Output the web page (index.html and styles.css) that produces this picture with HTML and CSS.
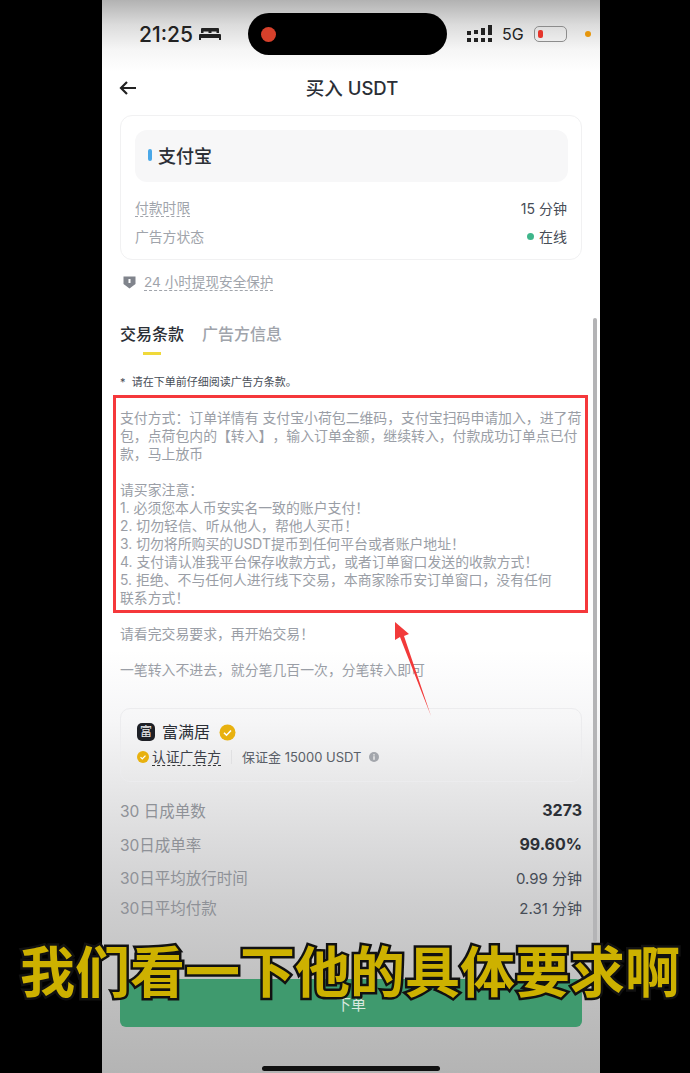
FILE: index.html
```html
<!DOCTYPE html>
<html lang="zh-CN">
<head>
    <meta charset="UTF-8">
    <meta name="viewport" content="width=device-width, initial-scale=1.0">
    <title>买入 USDT</title>
    <link rel="stylesheet" href="styles.css">
</head>
<body>
    <div class="phone">
        <!-- Status bar -->
        <div class="status-bar">
            <div class="status-left">
                <span class="time">21:25</span>
                <svg class="bed" width="22" height="14" viewBox="0 0 22 14">
                    <path d="M3 1h16a1 1 0 0 1 1 1v4h-2.500V4.500h-5V6h-3V4.500h-5V6H2V2a1 1 0 0 1 1-1z" fill="#222"/>
                    <path d="M1 7h20a1 1 0 0 1 1 1v5h-2v-2H2v2H0V8a1 1 0 0 1 1-1z" fill="#222"/>
                </svg>
            </div>
            <div class="island"><span class="rec-dot"></span></div>
            <div class="status-right">
                <svg class="signal" width="26" height="18" viewBox="0 0 26 18" fill="#222">
                    <rect x="0" y="6" width="4" height="4"/><rect x="0" y="13" width="4" height="4"/>
                    <rect x="7" y="5" width="4" height="4"/><rect x="7" y="13" width="4" height="4"/>
                    <rect x="14" y="3" width="4" height="7"/><rect x="14" y="13" width="4" height="4"/>
                    <rect x="21" y="0" width="4" height="10"/><rect x="21" y="13" width="4" height="4"/>
                </svg>
                <span class="net">5G</span>
                <span class="battery"><span class="battery-level"></span></span>
                <span class="orange-dot"></span>
            </div>
        </div>

        <!-- Nav -->
        <div class="nav">
            <svg class="back" width="18" height="14" viewBox="0 0 18 14" fill="none" stroke="#222" stroke-width="2.200">
                <path d="M17 7H2M8 1L2 7l6 6"/>
            </svg>
            <span class="nav-title">买入 USDT</span>
        </div>

        <div class="content">
            <!-- Payment card -->
            <div class="pay-card">
                <div class="pay-method"><span class="pay-mark"></span>支付宝</div>
                <div class="pay-row first">
                    <span class="label dashed">付款时限</span>
                    <span class="value">15 分钟</span>
                </div>
                <div class="pay-row">
                    <span class="label">广告方状态</span>
                    <span class="value"><span class="online-dot"></span>在线</span>
                </div>
            </div>

            <div class="safe-row">
                <svg width="13" height="14" viewBox="0 0 13 14">
                    <path d="M0.500 1.500h12v7.500l-6 4.500-6-4.500z" fill="#80848c"/>
                    <rect x="5.500" y="4" width="2" height="4" fill="#fff"/>
                </svg>
                <span class="label dashed">24 小时提现安全保护</span>
            </div>

            <!-- Tabs -->
            <div class="tabs">
                <div class="tab active">交易条款</div>
                <div class="tab">广告方信息</div>
            </div>

            <p class="note">*&nbsp; 请在下单前仔细阅读广告方条款。</p>

            <div class="terms">
                <p>支付方式：订单详情有 支付宝小荷包二维码，支付宝扫码申请加入，进了荷<br>包，点荷包内的【转入】，输入订单金额，继续转入，付款成功订单点已付<br>款，马上放币</p>
                <p>&nbsp;</p>
                <p>请买家注意：</p>
                <p>1. 必须您本人币安实名一致的账户支付！</p>
                <p>2. 切勿轻信、听从他人，帮他人买币！</p>
                <p>3. 切勿将所购买的USDT提币到任何平台或者账户地址！</p>
                <p>4. 支付请认准我平台保存收款方式，或者订单窗口发送的收款方式！</p>
                <p>5. 拒绝、不与任何人进行线下交易，本商家除币安订单窗口，没有任何<br>联系方式！</p>
                <p class="after">请看完交易要求，再开始交易！</p>
                <p>&nbsp;</p>
                <p>一笔转入不进去，就分笔几百一次，分笔转入即可</p>
            </div>

            <!-- Merchant -->
            <div class="merchant">
                <div class="merchant-name">
                    <span class="avatar">富</span>
                    <span class="merchant-title">富满居</span>
                    <svg width="17" height="17" viewBox="0 0 17 17">
                        <circle cx="8.500" cy="8.500" r="8" fill="#e8b10f"/>
                        <path d="M5 8.700l2.500 2.500L12 6.500" fill="none" stroke="#fff" stroke-width="1.600"/>
                    </svg>
                </div>
                <div class="merchant-meta">
                    <svg width="12" height="12" viewBox="0 0 17 17">
                        <circle cx="8.500" cy="8.500" r="8.500" fill="#e8b10f"/>
                        <path d="M5 8.700l2.500 2.500L12 6.500" fill="none" stroke="#fff" stroke-width="1.800"/>
                    </svg>
                    <span class="verified">认证广告方</span>
                    <span class="divider"></span>
                    <span class="deposit">保证金 15000 USDT</span>
                    <svg width="10" height="10" viewBox="0 0 10 10">
                        <circle cx="5" cy="5" r="5" fill="#a3a6ac"/>
                        <rect x="4.300" y="4.200" width="1.400" height="3.600" fill="#eee"/>
                        <rect x="4.300" y="2.200" width="1.400" height="1.300" fill="#eee"/>
                    </svg>
                </div>
            </div>

            <!-- Stats -->
            <div class="stats">
                <div class="stat s1"><span class="label">30 日成单数</span><span class="stat-strong">3273</span></div>
                <div class="stat s2"><span class="label">30日成单率</span><span class="stat-strong">99.60%</span></div>
                <div class="stat s3"><span class="label">30日平均放行时间</span><span class="value">0.99 分钟</span></div>
                <div class="stat s4"><span class="label">30日平均付款</span><span class="value">2.31 分钟</span></div>
            </div>

            <button class="order-btn">下单</button>
        </div>

        <div class="scrollbar"></div>
        <div class="home-bar"></div>
    </div>

    <!-- Video annotations -->
    <div class="red-box"></div>
    <svg class="red-arrow" width="44" height="96" viewBox="0 0 44 96">
        <polygon points="3,0 17,12 12,14 39,94 8,15 3,18" fill="#f23a3a"/>
    </svg>
    <div class="caption">我们看一下他的具体要求啊</div>
</body>
</html>
```

FILE: styles.css
```css
* {
    margin: 0;
    padding: 0;
    box-sizing: border-box;
}

body {
    position: relative;
    width: 690px;
    height: 1073px;
    overflow: hidden;
    background-color: #000;
    font-family: 'Inter', 'Noto Sans CJK SC', sans-serif;
    color: #1e2329;
    text-spacing-trim: space-all;
}

.phone {
    position: relative;
    width: 498px;
    height: 1073px;
    margin-left: 102px;
    padding-top: 13px;
    overflow: hidden;
    background: linear-gradient(#b2b2b2 0, #dcdcdc 25px, #f6f6f6 50px, #fff 72px, #fff 650px, #f6f6f7 720px, #e4e4e5 800px, #cfcfd0 900px, #bebebe 1000px, #b4b4b4 1073px);
}

/* Status bar */
.status-bar {
    display: flex;
    align-items: center;
    height: 42px;
    padding-left: 37px;
}

.status-left {
    display: flex;
    align-items: center;
    gap: 6px;
    width: 109px;
}

.time {
    font-size: 21px;
    font-weight: 500;
    color: #222;
}

.island {
    display: flex;
    align-items: center;
    width: 199px;
    height: 42px;
    padding-left: 13px;
    border-radius: 21px;
    background-color: #000;
}

.rec-dot {
    width: 15px;
    height: 15px;
    border-radius: 50%;
    background-color: #d6402b;
}

.status-right {
    display: flex;
    align-items: center;
    margin-left: 20px;
}

.net {
    margin-left: 9px;
    font-size: 16px;
    color: #222;
}

.battery {
    display: block;
    width: 33px;
    height: 16px;
    margin-left: 10px;
    padding: 3px;
    border: 1px solid #8c8c8c;
    border-radius: 5px;
}

.battery-level {
    display: block;
    width: 5px;
    height: 100%;
    border-radius: 2px;
    background-color: #e5352b;
}

.orange-dot {
    width: 6px;
    height: 6px;
    margin-left: 18px;
    border-radius: 50%;
    background-color: #e6960c;
}

/* Nav */
.nav {
    position: relative;
    display: flex;
    justify-content: center;
    align-items: center;
    height: 36px;
    margin-top: 14px;
}

.back {
    position: absolute;
    left: 17px;
    top: 12px;
}

.nav-title {
    position: relative;
    left: 1px;
    font-size: 18.500px;
    font-weight: 500;
    color: #2b2f36;
}

.content {
    padding: 0 18px;
}

/* Payment card */
.pay-card {
    height: 145px;
    margin-top: 10px;
    padding: 14px 13px 0 14px;
    border: 1px solid #f1f1f2;
    border-radius: 12px;
}

.pay-method {
    display: flex;
    align-items: center;
    gap: 6px;
    height: 52px;
    padding-left: 13px;
    padding-bottom: 2px;
    border-radius: 12px;
    background-color: #f7f7f8;
    font-size: 18px;
    font-weight: 500;
    color: #2b2f36;
}

.pay-mark {
    width: 4px;
    height: 12px;
    border-radius: 2px;
    background-color: #4aa8e8;
}

.pay-row {
    display: flex;
    justify-content: space-between;
    align-items: center;
    height: 28px;
    padding-right: 1px;
}

.pay-row.first {
    margin-top: 12px;
}

.label {
    font-size: 13.800px;
    color: #a0a4ab;
}

.label.dashed {
    border-bottom: 1px dashed #a0a4ab;
    line-height: 16px;
}

.value {
    font-size: 14px;
    color: #474d57;
}

.online-dot {
    display: inline-block;
    width: 7px;
    height: 7px;
    margin-right: 5px;
    border-radius: 50%;
    background-color: #3fb68b;
    vertical-align: 2px;
}

.safe-row {
    display: flex;
    align-items: center;
    gap: 8px;
    height: 20px;
    margin-top: 12px;
    padding-left: 3px;
}

.safe-row .label {
    font-size: 13.600px;
}

/* Tabs */
.tabs {
    display: flex;
    gap: 18px;
    margin-top: 30px;
}

.tab {
    font-size: 16px;
    font-weight: 500;
    line-height: 24px;
    color: #a0a4ab;
}

.tab.active {
    position: relative;
    color: #2b2f36;
}

.tab.active::after {
    content: '';
    position: absolute;
    left: 23px;
    bottom: -9px;
    width: 18px;
    height: 3px;
    background-color: #f0d93a;
}

.note {
    margin-top: 28px;
    font-size: 11px;
    line-height: 16px;
    color: #474d57;
}

/* Terms */
.terms {
    margin-top: 19px;
    width: 464px;
    font-size: 13.870px;
    line-height: 18px;
    white-space: nowrap;
    color: #9a9ea6;
}

.terms .after {
    margin-top: 18px;
}

/* Merchant */
.merchant {
    height: 74px;
    margin-top: 29px;
    padding: 12px 16px 0;
    border: 1px solid #ececee;
    border-radius: 10px;
}

.merchant-name {
    display: flex;
    align-items: center;
    gap: 7px;
    line-height: 22px;
    color: #2b2f36;
}

.merchant-title {
    margin-right: 2px;
    font-size: 16px;
}

.avatar {
    display: flex;
    justify-content: center;
    align-items: center;
    width: 18px;
    height: 18px;
    border-radius: 5px;
    background-color: #1e2026;
    font-size: 12px;
    color: #eee;
}

.merchant-meta {
    display: flex;
    align-items: center;
    gap: 3px;
    margin-top: 5px;
    line-height: 18px;
    color: #5a5f68;
}

.verified {
    border-bottom: 1px dashed #333;
    line-height: 16px;
    font-size: 13.800px;
    color: #3c4048;
}

.deposit {
    margin-right: 4px;
    font-size: 13px;
}

.divider {
    width: 1px;
    height: 14px;
    margin: 0 7px;
    background-color: #e0e0e2;
}

/* Stats */
.stats {
    margin-top: 16px;
}

.stat {
    display: flex;
    justify-content: space-between;
    align-items: center;
    height: 24px;
    margin-bottom: 10px;
}

.stat.s2 {
    margin-bottom: 9px;
}

.stat.s3 {
    margin-bottom: 6px;
}

.stats .label {
    color: #8e9197;
    font-size: 15.500px;
}

.stats .value {
    font-size: 15px;
}

.stat-strong {
    font-size: 16px;
    font-weight: 700;
    color: #2b2f36;
}

.order-btn {
    display: block;
    width: 100%;
    height: 48px;
    margin-top: 60px;
    border: none;
    border-radius: 6px;
    background-color: #3f9a6e;
    font-family: inherit;
    font-size: 15px;
    color: #d8e8df;
}

.scrollbar {
    position: absolute;
    left: 491px;
    top: 318px;
    width: 4px;
    height: 624px;
    border-radius: 2px;
    background-color: #b4b4b6;
}

.home-bar {
    position: absolute;
    left: 160px;
    bottom: 2px;
    width: 178px;
    height: 5px;
    border-radius: 3px;
    background-color: #111;
}

/* Video annotations on top of the recording */
.red-box {
    position: absolute;
    left: 113px;
    top: 395px;
    width: 475px;
    height: 218px;
    border: 3px solid #f5383b;
}

.red-arrow {
    position: absolute;
    left: 392px;
    top: 622px;
}

.caption {
    position: absolute;
    left: 0;
    top: 933px;
    width: 690px;
    padding-left: 20px;
    font-family: 'Noto Sans CJK SC', sans-serif;
    font-size: 55px;
    font-weight: 700;
    line-height: 70px;
    white-space: nowrap;
    color: #cdb100;
    -webkit-text-stroke: 5px #111;
    paint-order: stroke fill;
}
```
